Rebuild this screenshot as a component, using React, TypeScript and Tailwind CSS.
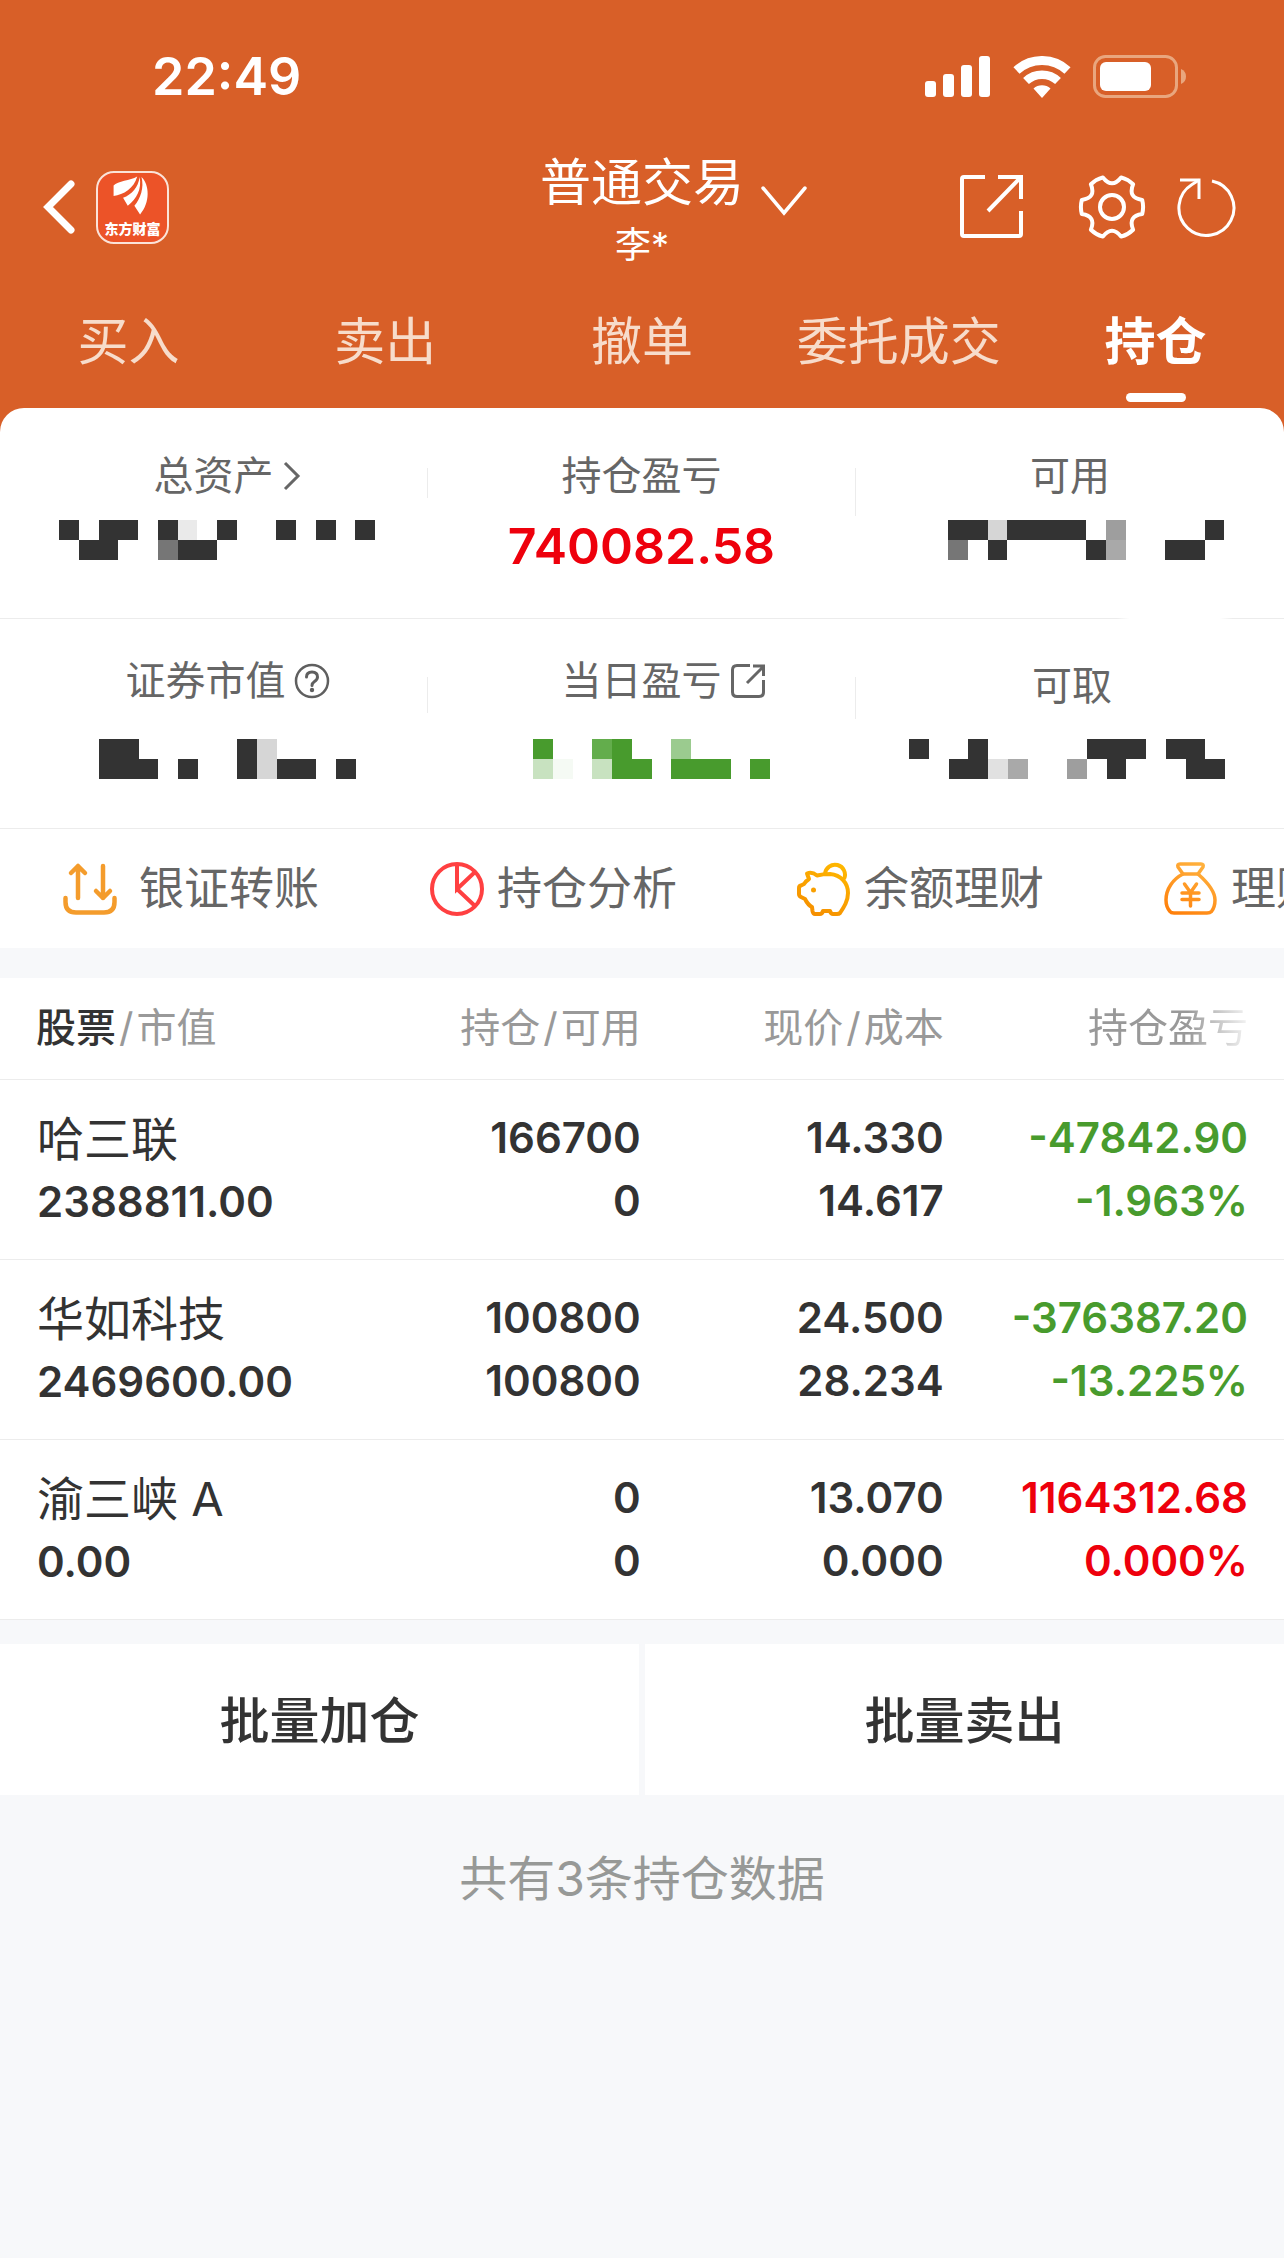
import { useState, type ReactNode } from 'react'
import clsx from 'clsx'

const TABS = ['买入', '卖出', '撤单', '委托成交', '持仓']

// One character is one tile of a hidden amount
const TILE_COLORS: Record<string, string> = {
  '#': '#333333',
  m: '#767676',
  n: '#9e9e9e',
  o: '#a9a9a9',
  s: '#d6d6d6',
  t: '#e1e1e1',
  u: '#eaeaea',
  G: '#489b2d',
  H: '#63ad4c',
  I: '#9bcb8f',
  J: '#c8e2c0',
  K: '#f5faf4',
}

interface Holding {
  name: string
  value: string
  amount: string
  available: string
  price: string
  cost: string
  profit: string
  rate: string
  up: boolean
}

const HOLDINGS: Holding[] = [
  {
    name: '哈三联',
    value: '2388811.00',
    amount: '166700',
    available: '0',
    price: '14.330',
    cost: '14.617',
    profit: '-47842.90',
    rate: '-1.963%',
    up: false,
  },
  {
    name: '华如科技',
    value: '2469600.00',
    amount: '100800',
    available: '100800',
    price: '24.500',
    cost: '28.234',
    profit: '-376387.20',
    rate: '-13.225%',
    up: false,
  },
  {
    name: '渝三峡 A',
    value: '0.00',
    amount: '0',
    available: '0',
    price: '13.070',
    cost: '0.000',
    profit: '1164312.68',
    rate: '0.000%',
    up: true,
  },
]

function gearPath() {
  const at = (deg: number, r: number) => {
    const a = (deg * Math.PI) / 180
    return `${(34 + r * Math.cos(a)).toFixed(1)} ${(33 + r * Math.sin(a)).toFixed(1)}`
  }
  let d = `M${at(-13, 31)}`
  for (let k = 0; k < 6; k++) {
    d += ` Q${at(k * 60, 32)} ${at(k * 60 + 13, 31)} Q${at(k * 60 + 30, 18)} ${at(k * 60 + 47, 31)}`
  }
  return d + 'Z'
}

function SignalIcon() {
  return (
    <svg width="66" height="42" viewBox="0 0 66 42" fill="#fff" aria-hidden="true">
      <rect x="0" y="25" width="11" height="16" rx="3" />
      <rect x="18" y="18" width="11" height="23" rx="3" />
      <rect x="36" y="9" width="11" height="32" rx="3" />
      <rect x="54" y="0" width="11" height="41" rx="3" />
    </svg>
  )
}

function WifiIcon() {
  return (
    <svg width="58" height="42" viewBox="0 0 58 42" fill="none" stroke="#fff" aria-hidden="true">
      <path d="M3.5 14.5a37.5 37.5 0 0 1 51 0" strokeWidth="9" />
      <path d="M13 25a23.5 23.5 0 0 1 32 0" strokeWidth="8.5" />
      <path d="M29 42l-8.5-9.5a13 13 0 0 1 17 0z" fill="#fff" stroke="none" />
    </svg>
  )
}

function BatteryIcon() {
  return (
    <svg width="95" height="44" viewBox="0 0 95 44" aria-hidden="true">
      <rect x="1.5" y="1.5" width="82" height="40" rx="11" fill="none" stroke="#e9a67e" strokeWidth="3" />
      <rect x="7" y="7" width="51" height="29" rx="6" fill="#fff" />
      <path d="M88 14q5 2 5 7.500t-5 7.500z" fill="#e9a67e" />
    </svg>
  )
}

function BrandLogo() {
  return (
    <svg className="h-11 w-[69px]" viewBox="0 4 73 44" fill="#fff" aria-hidden="true">
      <path d="M41.500 6.500C34 11 21 11 16.500 16v11C27 26 38 19 41.500 6.500z" />
      <path d="M44 7C42.500 18 36 25.500 26.500 29l5 8.500C41 30 46.500 20 44 7z" />
      <path d="M46 7c3 11-1 23-7.500 30.500l6 9C55.500 34 54.500 15 46 7z" />
    </svg>
  )
}

function ShareIcon() {
  return (
    <svg width="64" height="64" viewBox="0 0 64 64" fill="none" stroke="#fff" strokeWidth="4" aria-hidden="true">
      <path d="M25 2H4q-2 0-2 2v55q0 2 2 2h55q2 0 2-2V36" />
      <path d="M38 2h23v22M28 36L60 3" />
    </svg>
  )
}

function GearIcon() {
  return (
    <svg width="68" height="66" viewBox="0 0 68 66" fill="none" stroke="#fff" strokeWidth="4" strokeLinejoin="round" aria-hidden="true">
      <path d={gearPath()} />
      <circle cx="34" cy="33" r="12" />
    </svg>
  )
}

function RefreshIcon() {
  return (
    <svg width="60" height="60" viewBox="0 0 60 60" fill="none" stroke="#fff" strokeWidth="3" aria-hidden="true">
      <path d="M36 4A27.500 27.500 0 1 1 16 7.500L23 3" />
      <path d="M4 3h19v19" />
    </svg>
  )
}

function TransferIcon() {
  return (
    <svg width="54" height="54" viewBox="0 0 54 54" fill="none" stroke="#f49c2c" strokeWidth="4.500" strokeLinecap="round" strokeLinejoin="round" aria-hidden="true">
      <path d="M15 36V4M8 11l7-7 7 7M40 4v32M33 29l7 7 7-7" />
      <path d="M2.500 36v4q0 10.500 10.500 10.500h28q10.500 0 10.500-10.500v-4" />
    </svg>
  )
}

function PieIcon() {
  return (
    <svg width="54" height="54" viewBox="0 0 54 54" fill="none" stroke="#ff4041" strokeWidth="4" aria-hidden="true">
      <circle cx="27" cy="27" r="25" />
      <path d="M27 2v25l18-17M27 27l18 17" />
    </svg>
  )
}

function PiggyIcon() {
  return (
    <svg width="54" height="54" viewBox="0 0 54 54" fill="none" stroke="url(#piggy)" strokeWidth="4" strokeLinejoin="round" aria-hidden="true">
      <defs>
        <linearGradient id="piggy" x1="40" y1="0" x2="15" y2="54" gradientUnits="userSpaceOnUse">
          <stop stopColor="#ffb800" />
          <stop offset="1" stopColor="#f58e00" />
        </linearGradient>
      </defs>
      <path d="M28 12a10 10 0 1 1 19 5" />
      <path d="M10 11.500q5-2 10 2Q26 12 33 12c11 1 18 9 18 19 0 8-4 14-8 20q-1 1-3 1h-4q-2 0-3-3h-7q-1 3-3 3h-5q-2 0-2.500-3L15 45q-4-2-7-8l-4-2q-2-1-2-3v-6q0-2 2-2.500L7 22q2-3 5-5z" />
      <circle cx="16.500" cy="28" r="2.500" fill="#f9a000" stroke="none" />
    </svg>
  )
}

function MoneyBagIcon() {
  return (
    <svg width="54" height="54" viewBox="0 0 54 54" fill="none" stroke="url(#bag)" strokeWidth="3.500" strokeLinecap="round" strokeLinejoin="round" aria-hidden="true">
      <defs>
        <linearGradient id="bag" x1="40" y1="0" x2="12" y2="54" gradientUnits="userSpaceOnUse">
          <stop stopColor="#ffb33f" />
          <stop offset="1" stopColor="#ff7f0a" />
        </linearGradient>
      </defs>
      <path d="M19 12l-5-7q-1-3 2-3h21q3 0 2 3l-5 7z" />
      <path d="M19 12C9 17 2 27 2 38q0 7 4 11.500Q7 51 10 51h33q3 0 4.500-1.500Q51 45 51 38 51 27 34 12" />
      <path d="M20.500 22l6 8.500 6-8.500M26.500 31v13M18 31h17M18 37.500h17" />
    </svg>
  )
}

// Hidden amount, drawn as two rows of tiles
function Mosaic({ rows }: { rows: string[] }) {
  const cols = rows[0].length
  return (
    <svg
      className="h-10"
      viewBox={`0 0 ${cols * 79} 160`}
      shapeRendering="crispEdges"
      role="img"
      aria-label="金额已隐藏"
    >
      {rows.flatMap((row, y) =>
        row.split('').map((c, x) =>
          TILE_COLORS[c] ? (
            <rect key={`${x}-${y}`} x={x * 79} y={y * 80} width="79" height="80" fill={TILE_COLORS[c]} />
          ) : null
        )
      )}
    </svg>
  )
}

interface StatProps {
  label: ReactNode
  labelClass?: string
  valueClass?: string
  divider?: string
  children: ReactNode
}

function Stat({ label, labelClass, valueClass, divider, children }: StatProps) {
  return (
    <div className="flex items-start">
      <div className="flex flex-1 flex-col items-center">
        <div className={clsx('flex items-center text-[40px] leading-[56px] text-[#666]', labelClass)}>{label}</div>
        <div className={clsx('flex', valueClass)}>{children}</div>
      </div>
      {divider && <div className={clsx('w-px bg-[#ececec]', divider)} />}
    </div>
  )
}

function ActionButton({ icon, label, wide }: { icon: ReactNode; label: string; wide?: boolean }) {
  return (
    <button className={clsx('flex w-[367px] shrink-0 items-center', wide ? 'gap-[22px]' : 'gap-[13px]')}>
      {icon}
      <span className="text-[45px] leading-[60px] whitespace-nowrap text-[#666]">{label}</span>
    </button>
  )
}

function HoldingRow({ item }: { item: Holding }) {
  const tone = item.up ? 'text-[#ee000c]' : 'text-[#489b2d]'
  return (
    <tr className="h-[180px] border-b border-[#ececec] text-right align-top text-[42px] leading-[63px] font-semibold text-[#333]">
      <td className="pt-7 pl-[37px] text-left">
        <div className="text-[47px] leading-[62px] font-normal">{item.name}</div>
        <div>{item.value}</div>
      </td>
      <td className="pt-[26px]">
        <div>{item.amount}</div>
        <div>{item.available}</div>
      </td>
      <td className="pt-[26px]">
        <div>{item.price}</div>
        <div>{item.cost}</div>
      </td>
      <td className={clsx('pt-[26px] pr-9', tone)}>
        <div>{item.profit}</div>
        <div>{item.rate}</div>
      </td>
    </tr>
  )
}

export default function App() {
  const [tab, setTab] = useState('持仓')

  return (
    <div className="min-h-screen overflow-x-hidden bg-[#f7f8fa] font-['Inter','Noto_Sans_CJK_SC',sans-serif] text-[#333]">
      <header className="bg-[#d85f28] text-white">
        {/* Status bar */}
        <div className="flex h-[151px] items-center justify-between pt-0.5 pr-24 pl-[152px]">
          <span className="text-[52px] leading-[60px] font-semibold">22:49</span>
          <div className="flex items-center gap-[22px]">
            <SignalIcon />
            <WifiIcon />
            <BatteryIcon />
          </div>
        </div>

        {/* Title bar */}
        <div className="grid h-28 grid-cols-[1fr_auto_1fr] items-center px-10">
          <div className="flex items-center gap-[18px]">
            <button aria-label="返回">
              <svg width="38" height="60" viewBox="0 0 38 60" fill="none" stroke="#fff" strokeWidth="7" strokeLinecap="round" aria-hidden="true">
                <path d="M31 7L8 30l23 23" strokeLinejoin="miter" />
              </svg>
            </button>
            <button className="flex h-[73px] w-[73px] flex-col items-center justify-between rounded-[18px] border-2 border-[#fbe3d8] bg-[#ec5328] pb-1">
              <BrandLogo />
              <span className="text-[14px] leading-[18px] font-black">东方财富</span>
            </button>
          </div>
          <div className="text-center">
            <h1 className="text-[51px] leading-[64px]">普通交易</h1>
            <p className="mt-3 text-[36px] leading-9">李*</p>
          </div>
          <div className="flex items-center pr-2">
            <button className="mb-3 ml-4" aria-label="切换账户">
              <svg width="48" height="32" viewBox="0 0 48 32" fill="none" stroke="#fff" strokeWidth="3.500" strokeLinecap="round" aria-hidden="true">
                <path d="M3 3l21 25L45 3" />
              </svg>
            </button>
            <button className="ml-auto" aria-label="分享"><ShareIcon /></button>
            <button className="ml-[54px]" aria-label="设置"><GearIcon /></button>
            <button className="ml-[30px]" aria-label="刷新"><RefreshIcon /></button>
          </div>
        </div>

        {/* Tabs */}
        <nav className="grid grid-cols-5">
          {TABS.map((t) => (
            <button
              key={t}
              onClick={() => setTab(t)}
              className={clsx(
                'flex h-[145px] flex-col items-center justify-between pt-[49px] pb-1.5 text-[51px] leading-[60px]',
                t === tab ? 'font-bold text-white' : 'text-[#f7dccb]'
              )}
            >
              {t}
              {t === tab && <span className="h-[9px] w-[60px] rounded-full bg-white" />}
            </button>
          ))}
        </nav>

        {/* Account summary */}
        <section className="rounded-t-[24px] bg-white">
          <div className="grid h-[210px] grid-cols-3 pt-10">
            <Stat
              label={
                <>
                  总资产
                  <svg className="ml-2" width="20" height="30" viewBox="0 0 20 30" fill="none" stroke="#666" strokeWidth="3" aria-hidden="true">
                    <path d="M3 2l13 13L3 28" />
                  </svg>
                </>
              }
              labelClass="pl-7"
              valueClass="mt-4 pl-1.5"
              divider="mt-5 h-[30px]"
            >
              <Mosaic rows={['#.##.#u.#..#.#.#', '.##..m##........']} />
            </Stat>
            <Stat label="持仓盈亏" valueClass="mt-4" divider="mt-5 h-12">
              <span className="text-[50px] leading-[52px] font-semibold text-[#ee000c]">740082.58</span>
            </Stat>
            <Stat label="可用" valueClass="mt-4 pl-8">
              <Mosaic rows={['##s####.n....#', 'm.#....#o..##.']} />
            </Stat>
          </div>
          <div className="h-px bg-[linear-gradient(to_right,#ececec_87%,#fff_88%,#fff_95%,#ececec_96%)]" />
          <div className="grid h-[209px] grid-cols-3 pt-[34px]">
            <Stat
              label={
                <>
                  证券市值
                  <svg className="ml-2" width="36" height="36" viewBox="0 0 36 36" fill="none" stroke="#5f5f5f" strokeWidth="2.500" aria-hidden="true">
                    <circle cx="18" cy="18" r="16" />
                    <path d="M12.500 14q0-5 5.500-5t5.500 5q0 2.500-3 4.500-2.500 1.700-2.500 4" strokeLinecap="round" strokeWidth="3" />
                    <circle cx="18" cy="27" r="2.200" fill="#5f5f5f" stroke="none" />
                  </svg>
                </>
              }
              labelClass="pl-7"
              valueClass="mt-[30px] pl-7"
              divider="mt-6 h-[36px]"
            >
              <Mosaic rows={['##.....#s....', '###.#..#s##.#']} />
            </Stat>
            <Stat
              label={
                <>
                  当日盈亏
                  <svg className="ml-2" width="36" height="36" viewBox="0 0 36 36" fill="none" stroke="#666" strokeWidth="3" aria-hidden="true">
                    <path d="M20 2.500H7Q2.500 2.500 2.500 7v22q0 4.500 4.500 4.500h22q4.500 0 4.500-4.500V17" />
                    <path d="M23 3h10.500v10M17 20L33 4" />
                  </svg>
                </>
              }
              labelClass="pl-11"
              valueClass="mt-[30px] pl-5"
              divider="mt-6 h-[42px]"
            >
              <Mosaic rows={['G..HG..I....', 'JK.JGG.GGG.G']} />
            </Stat>
            <Stat label="可取" labelClass="pt-[5px] pl-1" valueClass="mt-[25px] pr-1.5">
              <Mosaic rows={['#..#.....###.##.', '..##to..n.#...##']} />
            </Stat>
          </div>
          <div className="h-px bg-[#ececec]" />
          <div className="flex h-[119px] overflow-hidden pl-[63px]">
            <ActionButton icon={<TransferIcon />} label="银证转账" wide />
            <ActionButton icon={<PieIcon />} label="持仓分析" />
            <ActionButton icon={<PiggyIcon />} label="余额理财" />
            <ActionButton icon={<MoneyBagIcon />} label="理财" />
          </div>
        </section>
      </header>

      <main>
        <table className="mt-[30px] w-full table-fixed border-collapse bg-white">
          <colgroup>
            <col className="w-[29%]" />
            <col className="w-[20.9%]" />
            <col className="w-[23.6%]" />
            <col />
          </colgroup>
          <thead>
            <tr className="h-[101px] border-b border-[#ececec] text-right text-[40px] leading-[56px] whitespace-nowrap text-[#999]">
              <th className="pl-9 text-left font-normal">
                <span className="font-medium text-[#333]">股票</span>
                <span className="mx-[3px]">/</span>市值
              </th>
              <th className="font-normal">
                持仓<span className="mx-[3px]">/</span>可用
              </th>
              <th className="font-normal">
                现价<span className="mx-[3px]">/</span>成本
              </th>
              <th className="pr-9 font-normal">
                <span className="[mask-image:linear-gradient(to_right,black_62%,transparent_105%)]">持仓盈亏</span>
              </th>
            </tr>
          </thead>
          <tbody>
            {HOLDINGS.map((item) => (
              <HoldingRow key={item.name} item={item} />
            ))}
          </tbody>
        </table>

        <div className="mt-6 grid grid-cols-2 gap-1.5">
          {['批量加仓', '批量卖出'].map((label) => (
            <button key={label} className="h-[151px] bg-white pt-1 text-[50px] leading-[60px] font-medium">
              {label}
            </button>
          ))}
        </div>

        <p className="mt-14 text-center text-[48px] leading-[56px] text-[#979997]">共有3条持仓数据</p>
      </main>
    </div>
  )
}
